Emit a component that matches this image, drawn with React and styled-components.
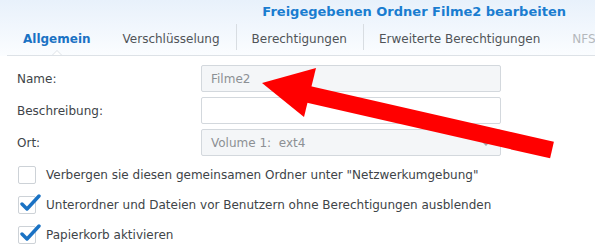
import styled, { createGlobalStyle } from "styled-components"

const GlobalStyle = createGlobalStyle`
  body {
    margin: 0;
    background: #fff;
    font-family: "DejaVu Sans", Verdana, sans-serif;
    font-size: 12px;
    color: #404448;
  }
`

const Page = styled.div`
  position: relative;
  width: 595px;
  height: 246px;
  overflow: hidden;
`

const Top = styled.div`
  background: linear-gradient(#e8f1fb, #fbfdff);
`

const Title = styled.div`
  height: 22px;
  display: flex;
  align-items: center;
  justify-content: flex-end;
  padding-right: 29px;
  font-size: 13px;
  font-weight: bold;
  color: #1a7dd0;
`

const Tabs = styled.div`
  display: flex;
  align-items: center;
  height: 33px;
  margin-left: 7px;
  border-bottom: 1px solid #dde2e7;
  white-space: nowrap;
  overflow: hidden;
`

const Tab = styled.div`
  position: relative;
  height: 33px;
  display: flex;
  align-items: center;
  padding: 0 16px;
  color: ${props => props.$active ? "#1a72c4" : props.$disabled ? "#b4b8bc" : "#505458"};
  font-weight: ${props => props.$active ? "bold" : "normal"};

  & + &::before {
    content: "";
    position: absolute;
    left: 0;
    top: 2px;
    height: 26px;
    border-left: 1px solid #d8dde2;
  }

  ${props => props.$active && `
    &::after {
      content: "";
      position: absolute;
      left: 50%;
      bottom: -1px;
      margin-left: -6px;
      width: 0;
      height: 0;
      border-left: 6px solid transparent;
      border-right: 6px solid transparent;
      border-bottom: 6px solid #dde2e7;
    }
  `}
`

const Notch = styled.span`
  position: absolute;
  left: 50%;
  bottom: -1px;
  margin-left: -5px;
  border-left: 5px solid transparent;
  border-right: 5px solid transparent;
  border-bottom: 5px solid #fff;
  z-index: 1;
`

const Form = styled.div`
  padding: 9px 0 0 17px;
  display: flex;
  flex-direction: column;
  gap: 5px;
`

const Row = styled.div`
  display: flex;
  align-items: center;
`

const Label = styled.div`
  width: 184px;
`

const Field = styled.div`
  position: relative;
  box-sizing: border-box;
  width: 300px;
  height: 27px;
  border: 1px solid #d3d8dd;
  border-radius: 2px;
  background: ${props => props.$disabled ? "#f4f6f8" : "#fff"};
  color: #8c9094;
  display: flex;
  align-items: center;
  padding-left: 9px;
  white-space: pre;
`

const Caret = styled.span`
  position: absolute;
  right: 9px;
  top: 11px;
  border-left: 5px solid transparent;
  border-right: 5px solid transparent;
  border-top: 5px solid #a4a8ac;
`

const Checks = styled.div`
  padding: 9px 0 0 18px;
  display: flex;
  flex-direction: column;
  gap: 11px;
`

const CheckRow = styled.div`
  display: flex;
  align-items: center;
  gap: 10px;
  height: 19px;
`

const Box = styled.span`
  position: relative;
  box-sizing: border-box;
  width: 18px;
  height: 18px;
  border: 1px solid #cdd2d7;
  border-radius: 2px;
  background: #fff;
  flex-shrink: 0;

  svg {
    position: absolute;
    left: 1px;
    top: -4px;
  }
`

const Overlay = styled.svg`
  position: absolute;
  left: 0;
  top: 0;
  pointer-events: none;
`

function Check ({ checked, children }) {
  return (
    <CheckRow>
      <Box>
        {checked && (
          <svg width="21" height="19" viewBox="0 0 21 19">
            <path d="M2 11 L7 16 L19 3" fill="none" stroke="#1a72c4" strokeWidth="3.4" strokeLinecap="round" strokeLinejoin="round" />
          </svg>
        )}
      </Box>
      <span>{children}</span>
    </CheckRow>
  )
}

function App () {
  return (
    <Page>
      <GlobalStyle />
      <Top>
        <Title>Freigegebenen Ordner Filme2 bearbeiten</Title>
        <Tabs>
          <Tab $active>Allgemein<Notch /></Tab>
          <Tab>Verschlüsselung</Tab>
          <Tab>Berechtigungen</Tab>
          <Tab>Erweiterte Berechtigungen</Tab>
          <Tab $disabled>NFS-Berechtigungen</Tab>
        </Tabs>
      </Top>
      <Form>
        <Row>
          <Label>Name:</Label>
          <Field $disabled>Filme2</Field>
        </Row>
        <Row>
          <Label>Beschreibung:</Label>
          <Field />
        </Row>
        <Row>
          <Label>Ort:</Label>
          <Field $disabled>Volume 1:  ext4<Caret /></Field>
        </Row>
      </Form>
      <Checks>
        <Check>Verbergen sie diesen gemeinsamen Ordner unter "Netzwerkumgebung"</Check>
        <Check checked>Unterordner und Dateien vor Benutzern ohne Berechtigungen ausblenden</Check>
        <Check checked>Papierkorb aktivieren</Check>
      </Checks>
      <Overlay width="595" height="246" viewBox="0 0 595 246">
        <line x1="298" y1="92" x2="552" y2="150" stroke="#ff0000" strokeWidth="17" />
        <polygon points="262,83 316,68 304,117" fill="#ff0000" />
      </Overlay>
    </Page>
  )
}

export default App
